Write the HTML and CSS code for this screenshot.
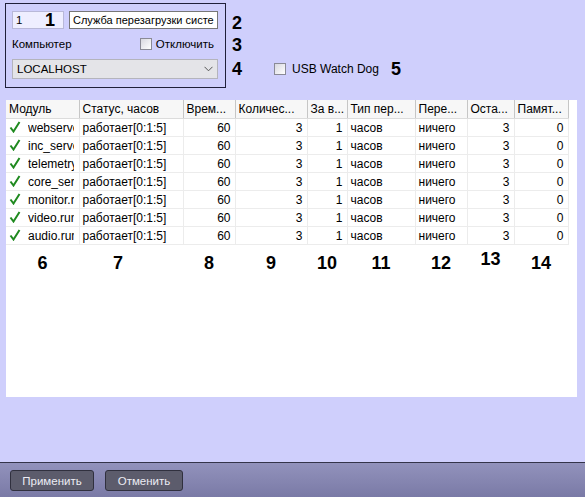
FILE: index.html
```html
<!DOCTYPE html>
<html lang="ru">

<head>
  <meta charset="UTF-8" />
  <meta name="viewport" content="width=device-width, initial-scale=1.0" />
  <title>Служба перезагрузки системы</title>
  <link rel="stylesheet" href="styles.css">
</head>

<body>
  <div class="page">
    <div class="main">
      <div class="top">
        <div class="box">
          <div class="row-id">
            <div class="num-input"><span>1</span><span class="mark mark-in">1</span></div>
            <div class="text-input">Служба перезагрузки систе</div>
          </div>
          <div class="row-pc">
            <span>Компьютер</span>
            <span class="check"><span class="cb"></span>Отключить</span>
          </div>
          <div class="combo">
            <span>LOCALHOST</span>
            <svg width="9" height="6" viewBox="0 0 9 6"><path d="M0.5 0.8 L4.5 4.8 L8.5 0.8" fill="none" stroke="#555" stroke-width="1" /></svg>
          </div>
        </div>
        <div class="marks">
          <div class="mark">2</div>
          <div class="mark">3</div>
          <div class="row-usb">
            <span class="mark">4</span>
            <span class="check usb"><span class="cb"></span>USB Watch Dog</span>
            <span class="mark">5</span>
          </div>
        </div>
      </div>

      <div class="list">
        <table>
          <colgroup>
            <col style="width:73px">
            <col style="width:104px">
            <col style="width:52px">
            <col style="width:72px">
            <col style="width:40px">
            <col style="width:68px">
            <col style="width:52px">
            <col style="width:47px">
            <col style="width:54px">
          </colgroup>
          <thead>
            <tr>
              <th>Модуль</th>
              <th>Статус, часов</th>
              <th>Врем...</th>
              <th>Количес...</th>
              <th>За в...</th>
              <th>Тип пер...</th>
              <th>Пере...</th>
              <th>Оста...</th>
              <th>Памят...</th>
            </tr>
          </thead>
          <tbody id="rows"></tbody>
        </table>
        <div class="col-marks">
          <span class="c6">6</span>
          <span class="c7">7</span>
          <span class="c8">8</span>
          <span class="c9">9</span>
          <span class="c10">10</span>
          <span class="c11">11</span>
          <span class="c12">12</span>
          <span class="c13">13</span>
          <span class="c14">14</span>
        </div>
      </div>
    </div>

    <div class="footer">
      <button class="btn apply">Применить</button>
      <button class="btn cancel">Отменить</button>
    </div>
  </div>

  <script>
    // модули службы
    let modules = ["webserver.run", "inc_server.run", "telemetry.run", "core_server.run", "monitor.run", "video.run", "audio.run"];
    let tick = '<svg class="tick" width="12" height="12" viewBox="0 0 12 12"><path d="M1.5 6.5 L4.5 10.5 L10.5 1" fill="none" stroke="#1f8a1f" stroke-width="2" stroke-linejoin="miter" /></svg>';
    let html = "";
    for (let i = 0; i < modules.length; i++) {
      html +=
        "<tr>" +
        "<td class='name'>" + tick + "<span class='mod'>" + modules[i] + "</span></td>" +
        "<td>работает[0:1:5]</td>" +
        "<td class='n'>60</td>" +
        "<td class='n'>3</td>" +
        "<td class='n'>1</td>" +
        "<td>часов</td>" +
        "<td>ничего</td>" +
        "<td class='n'>3</td>" +
        "<td class='n'>0</td>" +
        "</tr>";
    }
    document.getElementById("rows").innerHTML = html;
  </script>
</body>

</html>
```

FILE: styles.css
```css
html,
body {
  margin: 0;
  height: 100%;
  overflow: hidden;
}

body {
  background-color: #cfcffc;
  font-family: "Liberation Sans", Arial, sans-serif;
  font-size: 12px;
  color: #000;
}

.page {
  display: flex;
  flex-direction: column;
  height: 497px;
}

.main {
  flex: 1;
}

.top {
  display: flex;
}

.box {
  box-sizing: border-box;
  width: 221px;
  height: 85px;
  margin: 3px 0 0 5px;
  padding: 7px 7px 0 6px;
  border: 1px solid #20203a;
  font-size: 11.5px;
}

.row-id {
  display: flex;
  gap: 5px;
  height: 18px;
}

.num-input {
  box-sizing: border-box;
  display: flex;
  align-items: center;
  width: 52px;
  padding-left: 3px;
  background-color: #eeeeff;
  border: 1px solid #b8b8d8;
}

.mark-in {
  margin-left: auto;
  margin-right: 8px;
  font-size: 20px;
}

.text-input {
  box-sizing: border-box;
  flex: 1;
  padding-left: 3px;
  line-height: 16px;
  font-size: 11px;
  background-color: #fff;
  border: 1px solid #777;
  white-space: nowrap;
  overflow: hidden;
}

.row-pc {
  display: flex;
  align-items: center;
  justify-content: space-between;
  height: 30px;
  padding-right: 4px;
}

.check {
  display: flex;
  align-items: center;
}

.cb {
  box-sizing: border-box;
  width: 12px;
  height: 12px;
  margin-right: 4px;
  background: linear-gradient(135deg, #d8d8e0, #ffffff);
  border: 1px solid #8a8a96;
}

.combo {
  box-sizing: border-box;
  display: flex;
  align-items: center;
  justify-content: space-between;
  height: 20px;
  padding: 0 4px 0 4px;
  background-color: #e4e4e8;
  border: 1px solid #b4b4bc;
}

.mark {
  font-weight: bold;
  font-size: 18px;
}

.marks {
  padding: 12px 0 0 6px;
}

.marks > .mark {
  line-height: 22px;
}

.row-usb {
  display: flex;
  align-items: center;
  height: 24px;
  margin-top: 1px;
}

.usb {
  margin-left: 32px;
  margin-right: 12px;
  font-size: 12px;
}

.usb .cb {
  margin-right: 6px;
}

.list {
  box-sizing: border-box;
  width: 571px;
  height: 297px;
  margin: 12px 0 0 6px;
  background-color: #fff;
}

table {
  table-layout: fixed;
  width: 562px;
  border-collapse: collapse;
}

th {
  height: 18px;
  padding: 0 3px;
  font-weight: normal;
  text-align: left;
  background-color: #f7f7f7;
  border-right: 1px solid #c6c6c6;
  border-bottom: 1px solid #dcdcdc;
  white-space: nowrap;
  overflow: hidden;
}

td {
  height: 17px;
  padding: 0 3px;
  border-right: 1px solid #ececec;
  border-bottom: 1px solid #ececec;
  white-space: nowrap;
  overflow: hidden;
}

td.n {
  text-align: right;
  padding-right: 4px;
}

td.name {
  padding-left: 3px;
}

.mod {
  display: inline-block;
  width: 46px;
  overflow: hidden;
  vertical-align: bottom;
}

.tick {
  vertical-align: -1px;
  margin-right: 7px;
}

.col-marks {
  display: grid;
  grid-template-columns: 73px 104px 52px 72px 40px 68px 52px 47px 54px;
  margin-top: 8px;
  font-weight: bold;
  font-size: 18px;
  text-align: center;
}

.c7 {
  padding-right: 26px;
}

.c13 {
  margin-top: -4px;
}

.footer {
  display: flex;
  gap: 11px;
  height: 35px;
  padding: 7px 0 0 10px;
  box-sizing: border-box;
  border-top: 1px solid #34344a;
  background: linear-gradient(#9292bc, #7a7aa6);
}

.btn {
  height: 21px;
  padding: 0;
  font-family: "Liberation Sans", Arial, sans-serif;
  font-size: 11.5px;
  color: #ececf4;
  background-color: #5c5c6c;
  border: 1px solid #30303e;
  border-radius: 3px;
}

.apply {
  width: 84px;
}

.cancel {
  width: 78px;
}
```
